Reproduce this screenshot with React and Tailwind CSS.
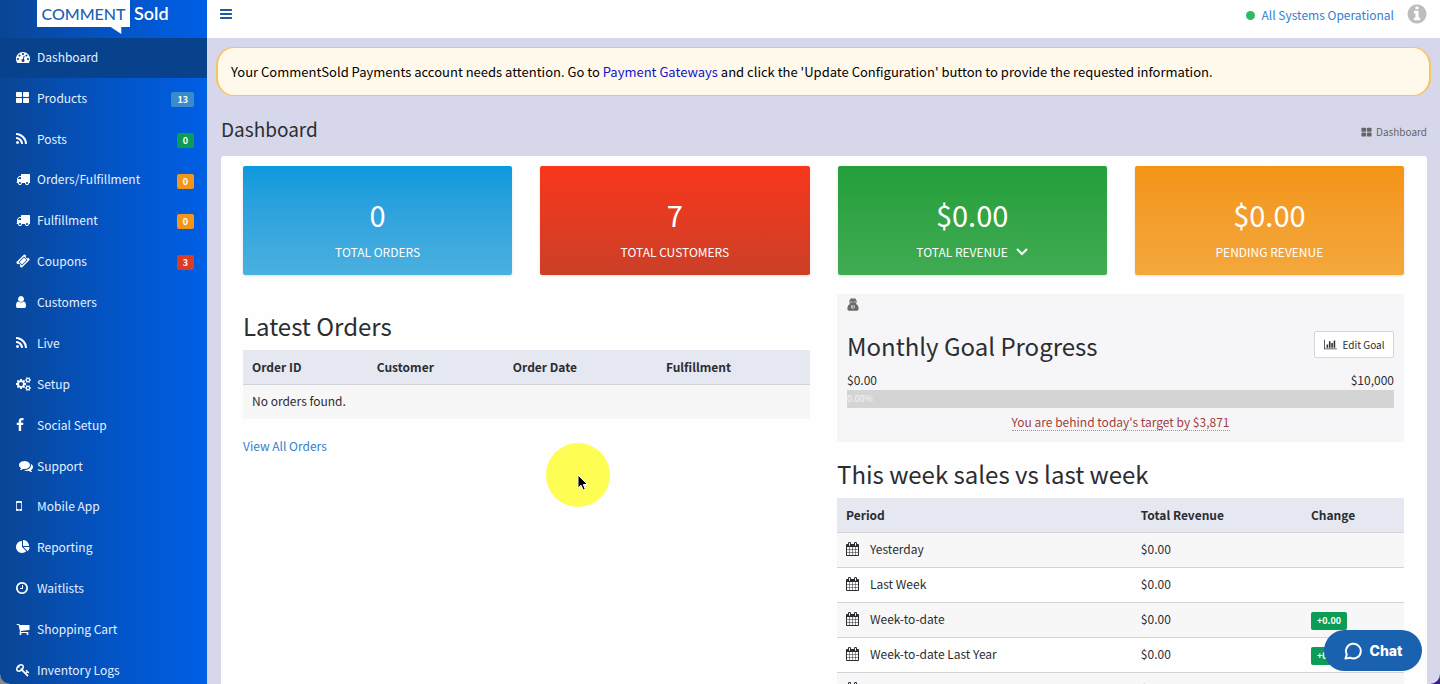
import clsx from 'clsx'

const ICONS = {
  tachometer:
    'M384 1152q0-53-37.5-90.5t-90.5-37.5-90.5 37.5-37.5 90.5 37.5 90.5 90.5 37.5 90.5-37.5 37.5-90.5zm192-448q0-53-37.5-90.5t-90.5-37.5-90.5 37.5-37.5 90.5 37.5 90.5 90.5 37.5 90.5-37.5 37.5-90.5zm428 481l101-382q6-26-7.5-48.5t-38.5-29.5-48 6.5-30 39.5l-101 382q-60 5-107 43.5t-63 98.5q-20 77 20 146t117 89 146-20 89-117q16-60-6-117t-72-91zm660-33q0-53-37.5-90.5t-90.5-37.5-90.5 37.5-37.5 90.5 37.5 90.5 90.5 37.5 90.5-37.5 37.5-90.5zm-640-640q0-53-37.5-90.5t-90.5-37.5-90.5 37.5-37.5 90.5 37.5 90.5 90.5 37.5 90.5-37.5 37.5-90.5zm448 192q0-53-37.5-90.5t-90.5-37.5-90.5 37.5-37.5 90.5 37.5 90.5 90.5 37.5 90.5-37.5 37.5-90.5zm320 448q0 261-141 483-19 29-54 29h-1402q-35 0-54-29-141-221-141-483 0-182 71-348t191-286 286-191 348-71 348 71 286 191 191 286 71 348z',
  grid: 'M832 1024v384q0 52-38 90t-90 38h-512q-52 0-90-38t-38-90v-384q0-52 38-90t90-38h512q52 0 90 38t38 90zm0-768v384q0 52-38 90t-90 38h-512q-52 0-90-38t-38-90v-384q0-52 38-90t90-38h512q52 0 90 38t38 90zm896 768v384q0 52-38 90t-90 38h-512q-52 0-90-38t-38-90v-384q0-52 38-90t90-38h512q52 0 90 38t38 90zm0-768v384q0 52-38 90t-90 38h-512q-52 0-90-38t-38-90v-384q0-52 38-90t90-38h512q52 0 90 38t38 90z',
  rss: 'M576 1344q0 80-56 136t-136 56-136-56-56-136 56-136 136-56 136 56 56 136zm512 123q2 28-17 48-18 21-47 21h-135q-25 0-43-16.5t-20-41.5q-22-229-184.5-391.5t-391.5-184.5q-25-2-41.5-20t-16.5-43v-135q0-29 21-47 17-17 43-17h5q160 13 306 80.5t259 181.5q114 113 181.5 259t80.5 306zm512 2q2 27-18 47-18 20-46 20h-143q-26 0-44.5-17.5t-19.5-42.5q-12-215-101-408.5t-231.5-336-336-231.5-408.5-102q-25-1-42.5-19.5t-17.5-43.5v-143q0-28 20-46 18-18 44-18h3q262 13 501.5 120t425.5 294q187 186 294 425.5t120 501.5z',
  truck:
    'M640 1408q0-52-38-90t-90-38-90 38-38 90 38 90 90 38 90-38 38-90zm-384-512h384v-256h-158q-13 0-22 9l-195 195q-9 9-9 22v30zm1280 512q0-52-38-90t-90-38-90 38-38 90 38 90 90 38 90-38 38-90zm256-1088v1024q0 15-4 26.5t-13.5 18.5-16.5 11.5-23.5 6-22.5 2-25.5 0-22.5-.5q0 106-75 181t-181 75-181-75-75-181h-384q0 106-75 181t-181 75-181-75-75-181h-64q-3 0-22.5.5t-25.5 0-22.5-2-23.5-6-16.5-11.5-13.5-18.5-4-26.5q0-26 19-45t45-19v-320q0-8-.5-35t0-38 2.5-34.5 6.5-37 14-30.5 22.500-30l198-198q19-19 50.5-32t58.5-13h160v-192q0-26 19-45t45-19h1024q26 0 45 19t19 45z',
  ticket:
    'M1024 452l316 316-572 572-316-316zm-211 979l618-618q19-19 19-45t-19-45l-362-362q-18-18-45-18t-45 18l-618 618q-19 19-19 45t19 45l362 362q18 18 45 18t45-18zm889-637l-907 908q-37 37-90.5 37t-90.5-37l-126-126q56-56 56-136t-56-136-136-56-136 56l-125-126q-37-37-37-90.5t37-90.5l907-906q37-37 90.5-37t90.5 37l125 125q-56 56-56 136t56 136 136 56 136-56l126 125q37 37 37 90.5t-37 90.5z',
  user: 'M1536 1399q0 109-62.5 187t-150.5 78h-854q-88 0-150.5-78t-62.5-187q0-85 8.5-160.5t31.5-152 58.5-131 94-89 134.5-34.5q131 128 313 128t313-128q76 0 134.5 34.5t94 89 58.5 131 31.5 152 8.5 160.5zm-256-887q0 159-112.5 271.5t-271.5 112.5-271.5-112.5-112.5-271.5 112.5-271.5 271.5-112.5 271.5 112.5 112.5 271.5z',
  cogs: 'M896 896q0-106-75-181t-181-75-181 75-75 181 75 181 181 75 181-75 75-181zm768 512q0-52-38-90t-90-38-90 38-38 90q0 53 37.5 90.5t90.5 37.5 90.5-37.5 37.5-90.5zm0-1024q0-52-38-90t-90-38-90 38-38 90q0 53 37.5 90.5t90.5 37.5 90.5-37.5 37.5-90.5zm-384 421v185q0 10-7 19.5t-16 10.5l-155 24q-11 35-32 76 34 48 90 115 7 11 7 20 0 12-7 19-23 30-82.5 89.5t-78.5 59.5q-11 0-21-7l-115-90q-37 19-77 31-11 108-23 155-7 24-30 24h-186q-11 0-20-7.5t-10-17.5l-23-153q-34-10-75-31l-118 89q-7 7-20 7-11 0-21-8-144-133-144-160 0-9 7-19 10-14 41-53t47-61q-23-44-35-82l-152-24q-10-1-17-9.5t-7-19.5v-185q0-10 7-19.5t16-10.5l155-24q11-35 32-76-34-48-90-115-7-11-7-20 0-12 7-20 22-30 82-89t79-59q11 0 21 7l115 90q34-18 77-32 11-108 23-154 7-24 30-24h186q11 0 20 7.5t10 17.5l23 153q34 10 75 31l118-89q8-7 20-7 11 0 21 8 144 133 144 160 0 8-7 19-12 16-42 54t-45 60q23 48 34 82l152 23q10 2 17 10.5t7 19.5zm640 533v140q0 16-149 31-12 27-30 52 51 113 51 138 0 4-4 7-122 71-124 71-8 0-46-47t-52-68q-20 2-30 2t-30-2q-14 21-52 68t-46 47q-2 0-124-71-4-3-4-7 0-25 51-138-18-25-30-52-149-15-149-31v-140q0-16 149-31 13-29 30-52-51-113-51-138 0-4 4-7 4-2 35-20t59-34 30-16q8 0 46 46.5t52 67.5q20-2 30-2t30 2q51-71 92-112l6-2q4 0 124 70 4 3 4 7 0 25-51 138 17 23 30 52 149 15 149 31zm0-1024v140q0 16-149 31-12 27-30 52 51 113 51 138 0 4-4 7-122 71-124 71-8 0-46-47t-52-68q-20 2-30 2t-30-2q-14 21-52 68t-46 47q-2 0-124-71-4-3-4-7 0-25 51-138-18-25-30-52-149-15-149-31v-140q0-16 149-31 13-29 30-52-51-113-51-138 0-4 4-7 4-2 35-20t59-34 30-16q8 0 46 46.5t52 67.5q20-2 30-2t30 2q51-71 92-112l6-2q4 0 124 70 4 3 4 7 0 25-51 138 17 23 30 52 149 15 149 31z',
  facebook:
    'M1343 12v264h-157q-86 0-116 36t-30 108v189h293l-39 296h-254v759h-306v-759h-255v-296h255v-218q0-186 104-288.5t277-102.5q147 0 228 12z',
  comments:
    'M1408 768q0 139-94 257t-256.5 186.5-353.5 68.5q-86 0-176-16-124 88-278 128-36 9-86 16h-3q-11 0-20.5-8t-11.5-21q-1-3-1-6.5t.5-6.5 2-6l2.5-5 3.5-5.5 4-5 4.5-5 4-4.5q5-6 23-25t26-29.5 22.5-29 25-38.5 20.5-44q-124-72-195-177t-71-224q0-139 94-257t256.5-186.5 353.5-68.5 353.5 68.5 256.5 186.5 94 257zm384 256q0 120-71 224.5t-195 176.5q10 24 20.5 44t25 38.5 22.5 29 26 29.5 23 25q1 1 4 4.5t4.5 5 4 5 3.5 5.5l2.5 5 2 6 .5 6.5-1 6.5q-3 14-13 22t-22 7q-50-7-86-16-154-40-278-128-90 16-176 16-271 0-472-132 58 4 88 4 161 0 309-45t264-129q125-92 192-212t67-254q0-77-23-152 129 71 204 178t75 230z',
  mobile:
    'M976 1408q0-33-23.5-56.5t-56.5-23.5-56.5 23.5-23.5 56.5 23.5 56.5 56.5 23.5 56.5-23.5 23.5-56.5zm208-160v-704q0-13-9.5-22.5t-22.5-9.5h-512q-13 0-22.5 9.5t-9.5 22.5v704q0 13 9.5 22.5t22.5 9.5h512q13 0 22.5-9.5t9.5-22.5zm-192-848q0-16-16-16h-160q-16 0-16 16t16 16h160q16 0 16-16zm288-16v1024q0 52-38 90t-90 38h-512q-52 0-90-38t-38-90v-1024q0-52 38-90t90-38h512q52 0 90 38t38 90z',
  pie: 'M768 890l546 546q-106 108-247.5 168t-298.5 60q-209 0-385.5-103t-279.5-279.5-103-385.5 103-385.5 279.5-279.5 385.5-103v762zm187 6h773q0 157-60 298.5t-168 247.5zm709-128h-768v-768q209 0 385.5 103t279.5 279.5 103 385.5z',
  clock:
    'M1024 544v448q0 14-9 23t-23 9h-320q-14 0-23-9t-9-23v-64q0-14 9-23t23-9h224v-352q0-14 9-23t23-9h64q14 0 23 9t9 23zm416 352q0-148-73-273t-198-198-273-73-273 73-198 198-73 273 73 273 198 198 273 73 273-73 198-198 73-273zm224 0q0 209-103 385.5t-279.5 279.5-385.5 103-385.5-103-279.5-279.5-103-385.5 103-385.5 279.5-279.5 385.5-103 385.5 103 279.5 279.5 103 385.5z',
  cart: 'M704 1536q0 52-38 90t-90 38-90-38-38-90 38-90 90-38 90 38 38 90zm896 0q0 52-38 90t-90 38-90-38-38-90 38-90 90-38 90 38 38 90zm128-1088v512q0 24-16.5 42.5t-40.5 21.5l-1044 122q13 60 13 70 0 16-24 64h920q26 0 45 19t19 45-19 45-45 19h-1024q-26 0-45-19t-19-45q0-11 8-31.5t16-36 21.5-40 15.5-29.5l-177-823h-204q-26 0-45-19t-19-45 19-45 45-19h256q16 0 28.5 6.5t19.5 15.5 13 24.5 8 26 5.5 29.5 4.5 26h1201q26 0 45 19t19 45z',
  key: 'M832 512q0-80-56-136t-136-56-136 56-56 136q0 42 19 83-41-19-83-19-80 0-136 56t-56 136 56 136 136 56 136-56 56-136q0-42-19-83 41 19 83 19 80 0 136-56t56-136zm851 704q0 17-49 66t-66 49q-9 0-28.5-16t-36.5-33-38.5-40-24.5-26l-96 96 220 220q28 28 28 68 0 42-39 81t-81 39q-40 0-68-28l-671-671q-176 131-365 131-163 0-265.5-102.5t-102.5-265.5q0-160 95-313t248-248 313-95q163 0 265.5 102.5t102.5 265.5q0 189-131 365l355 355 96-96q-3-3-26-24.5t-40-38.5-33-36.5-16-28.5q0-17 49-66t66-49q13 0 23 10 6 6 46 44.5t82 79.5 86.5 86 73 78 28.5 41z',
  bars: 'M1664 1344v128q0 26-19 45t-45 19h-1408q-26 0-45-19t-19-45v-128q0-26 19-45t45-19h1408q26 0 45 19t19 45zm0-512v128q0 26-19 45t-45 19h-1408q-26 0-45-19t-19-45v-128q0-26 19-45t45-19h1408q26 0 45 19t19 45zm0-512v128q0 26-19 45t-45 19h-1408q-26 0-45-19t-19-45v-128q0-26 19-45t45-19h1408q26 0 45 19t19 45z',
  info: 'M1152 1376v-160q0-14-9-23t-23-9h-96v-512q0-14-9-23t-23-9h-320q-14 0-23 9t-9 23v160q0 14 9 23t23 9h96v320h-96q-14 0-23 9t-9 23v160q0 14 9 23t23 9h448q14 0 23-9t9-23zm-128-896v-160q0-14-9-23t-23-9h-192q-14 0-23 9t-9 23v160q0 14 9 23t23 9h192q14 0 23-9t9-23zm640 416q0 209-103 385.5t-279.5 279.5-385.5 103-385.5-103-279.5-279.5-103-385.5 103-385.5 279.5-279.5 385.5-103 385.5 103 279.5 279.5 103 385.5z',
  barChart:
    'M640 896v512h-256v-512h256zm384-512v1024h-256v-1024h256zm1024 1152v128h-2048v-1536h128v1408h1920zm-640-896v768h-256v-768h256zm384-384v1152h-256v-1152h256z',
  calendar:
    'M192 1664h288v-288h-288v288zm352 0h320v-288h-320v288zm-352-352h288v-320h-288v320zm352 0h320v-320h-320v320zm-352-384h288v-288h-288v288zm736 736h320v-288h-320v288zm-384-736h320v-288h-320v288zm768 736h288v-288h-288v288zm-384-352h320v-320h-320v320zm-352-864v-288q0-13-9.5-22.5t-22.5-9.5h-64q-13 0-22.5 9.5t-9.5 22.5v288q0 13 9.5 22.5t22.5 9.5h64q13 0 22.5-9.5t9.5-22.5zm736 864h288v-320h-288v320zm-384-384h320v-288h-320v288zm384 0h288v-288h-288v288zm32-480v-288q0-13-9.5-22.5t-22.5-9.5h-64q-13 0-22.5 9.5t-9.5 22.5v288q0 13 9.5 22.5t22.5 9.5h64q13 0 22.5-9.5t9.5-22.5zm384-64v1280q0 52-38 90t-90 38h-1408q-52 0-90-38t-38-90v-1280q0-52 38-90t90-38h128v-96q0-66 47-113t113-47h64q66 0 113 47t47 113v96h384v-96q0-66 47-113t113-47h64q66 0 113 47t47 113v96h128q52 0 90 38t38 90z',
}

// x is the left bearing of the glyph, so icons line up on their left edge
function Icon({ name, x = 0, w = 1792, className = 'w-3.5 h-3.5' }) {
  return (
    <svg viewBox={`${x} 0 ${w} 1792`} fill="currentColor" className={clsx('shrink-0', className)} aria-hidden="true">
      <path d={ICONS[name]} />
    </svg>
  )
}

const NAV = [
  { label: 'Dashboard', icon: 'tachometer', active: true, short: true },
  { label: 'Products', icon: 'grid', x: 64, badge: '13', color: 'bg-[#3a8bc9]' },
  { label: 'Posts', icon: 'rss', x: 192, badge: '0', color: 'bg-[#0b9c55]' },
  { label: 'Orders/Fulfillment', icon: 'truck', badge: '0', color: 'bg-[#f39519]', short: true },
  { label: 'Fulfillment', icon: 'truck', badge: '0', color: 'bg-[#f39519]' },
  { label: 'Coupons', icon: 'ticket', badge: '3', color: 'bg-[#d93d28]' },
  { label: 'Customers', icon: 'user', x: 256 },
  { label: 'Live', icon: 'rss', x: 192 },
  { label: 'Setup', icon: 'cogs', w: 1920, iconClass: 'w-[15px] h-3.5' },
  { label: 'Social Setup', icon: 'facebook', x: 384 },
  { label: 'Support', icon: 'comments', x: -384, w: 2176, iconClass: 'w-[17px] h-3.5' },
  { label: 'Mobile App', icon: 'mobile', x: 512, short: true },
  { label: 'Reporting', icon: 'pie' },
  { label: 'Waitlists', icon: 'clock', x: 128 },
  { label: 'Shopping Cart', icon: 'cart' },
  { label: 'Inventory Logs', icon: 'key' },
]

const TILES = [
  { value: '0', label: 'TOTAL ORDERS', color: 'from-[#0a99dd] to-[#4ab0df]' },
  { value: '7', label: 'TOTAL CUSTOMERS', color: 'from-[#f9361b] to-[#cb3f27]' },
  { value: '$0.00', label: 'TOTAL REVENUE', color: 'from-[#239f3a] to-[#40ab53]', menu: true },
  { value: '$0.00', label: 'PENDING REVENUE', color: 'from-[#f39415] to-[#f3a83c]' },
]

const PERIODS = [
  { label: 'Yesterday', revenue: '$0.00' },
  { label: 'Last Week', revenue: '$0.00' },
  { label: 'Week-to-date', revenue: '$0.00', change: '+0.00' },
  { label: 'Week-to-date Last Year', revenue: '$0.00', change: '+0.00' },
  { label: 'This Month', revenue: '$0.00' },
]

function Logo() {
  return (
    <a href="#home" className="flex h-[38px] items-start pl-[37px] text-base leading-[27px] font-['Lato',sans-serif] text-white">
      <span className="relative h-[27px] w-[93px] bg-white text-center font-medium text-[#2160b0]">
        COMMENT
        <svg viewBox="0 0 12 8" className="absolute right-2 top-full h-[7px] w-3" fill="#fff" aria-hidden="true">
          <path d="M0 0h12v8z" />
        </svg>
      </span>
      <span className="pl-1 text-[18px] font-semibold">Sold</span>
    </a>
  )
}

function Sidebar() {
  return (
    <aside className="w-[207px] shrink-0 bg-linear-to-r from-[#0a4595] via-[#0353c3] to-[#005fe6]">
      <Logo />
      <nav>
        <ul>
          {NAV.map((item) => (
            <li key={item.label}>
              <a
                href="#nav"
                className={clsx(
                  'flex items-center pl-4 pr-[13px] pb-[2px] text-[#e4f1ff]',
                  item.short ? 'h-10' : 'h-[41px]',
                  item.active && 'bg-[#09428c]'
                )}
              >
                <span className="w-[21px] shrink-0 text-white">
                  <Icon name={item.icon} x={item.x} w={item.w} className={item.iconClass} />
                </span>
                <span className="flex-1">{item.label}</span>
                {item.badge ? (
                  <span className={clsx('mt-1 rounded-xs px-[6px] text-[9px] leading-[15px] font-bold text-white', item.color)}>
                    {item.badge}
                  </span>
                ) : null}
              </a>
            </li>
          ))}
        </ul>
      </nav>
    </aside>
  )
}

function StatTile({ value, label, color, menu }) {
  return (
    <div className={clsx('flex h-[109px] flex-col items-center rounded-xs bg-linear-to-b pt-7 text-white shadow-sm', color)}>
      <div className="text-[29px] leading-[41px]">{value}</div>
      {menu ? (
        <button type="button" className="flex items-center gap-2 text-xs leading-[34px]">
          {label}
          <svg viewBox="0 0 12 8" className="h-2 w-3" fill="none" stroke="currentColor" strokeWidth="2" aria-hidden="true">
            <path d="M1 1l5 5 5-5" />
          </svg>
        </button>
      ) : (
        <div className="text-xs leading-[34px]">{label}</div>
      )}
    </div>
  )
}

function LatestOrders() {
  return (
    <section className="pt-[14px]">
      <h2 className="text-2xl leading-[36px]">Latest Orders</h2>
      <table className="mt-[6px] w-full table-fixed text-left">
        <thead>
          <tr className="h-[34px] bg-[#e6e8f1]">
            <th className="w-[22%] px-[9px]">Order ID</th>
            <th className="w-[24%] px-[9px]">Customer</th>
            <th className="w-[27%] px-[9px]">Order Date</th>
            <th className="px-[9px]">Fulfillment</th>
          </tr>
        </thead>
        <tbody>
          <tr className="h-[35px] border-t border-[#d2d4d9] bg-[#f7f7f8]">
            <td colSpan={4} className="px-[9px] pb-[2px]">
              No orders found.
            </td>
          </tr>
        </tbody>
      </table>
      <a href="#orders" className="mt-[17px] inline-block text-[#3480cc]">
        View All Orders
      </a>
    </section>
  )
}

function MonthlyGoal() {
  return (
    <section className="h-[148px] bg-[#f6f6f8] px-[10px] pt-1">
      <svg viewBox="0 0 12 13" className="h-[13px] w-3" aria-hidden="true">
        <path fill="#6a6a6a" d="M3.4.8 4.6.2 6 .7 7.4.2l1.2.6.4 1.7h1v1H9.2c.4 1 .3 1.700-.2 2.600C10.700 7 11.600 8.600 11.600 10.600c0 1.500-.6 2.200-1.800 2.200H2.200C1 12.800.4 12.100.4 10.600c0-2 .9-3.600 2.600-4.500-.5-.9-.6-1.600-.2-2.600H2v-1h1z" />
        <path stroke="#f6f6f8" strokeWidth=".7" fill="none" d="M3.200 4h2.300M6.500 4h2.300M4.500 7.200v3M5.900 7.200v4M7.300 7.200v3" />
      </svg>
      <div className="mt-[15px] flex items-center justify-between">
        <h2 className="text-2xl leading-[40px]">Monthly Goal Progress</h2>
        <button
          type="button"
          className="mb-[3px] flex h-[27px] w-20 items-center justify-center gap-[6px] rounded-xs border border-[#d4d5dd] bg-white text-[10px]"
        >
          <Icon name="barChart" w={2048} className="h-[11px] w-[13px]" />
          Edit Goal
        </button>
      </div>
      <div className="mt-[5px] flex justify-between pb-px leading-[18px]">
        <span>$0.00</span>
        <span>$10,000</span>
      </div>
      <div className="h-[18px] bg-[#d4d4d5] text-[9px] leading-[18px] text-[#f4f4f4]">0.00%</div>
      <div className="pt-1 text-center">
        <span className="inline-block border-b border-dotted border-[#999] leading-[17px] text-[#a23f3b]">
          You are behind today's target by $3,871
        </span>
      </div>
    </section>
  )
}

function WeekSales() {
  return (
    <section className="pt-[14px]">
      <h2 className="text-2xl leading-[36px]">This week sales vs last week</h2>
      <table className="mt-[6px] w-full table-fixed text-left">
        <thead>
          <tr className="h-[34px] bg-[#e6e8f1]">
            <th className="w-[52%] px-[9px]">Period</th>
            <th className="w-[30%] px-[9px]">Total Revenue</th>
            <th className="px-[9px]">Change</th>
          </tr>
        </thead>
        <tbody>
          {PERIODS.map((row) => (
            <tr key={row.label} className="h-[35px] border-t border-[#d2d4d9] odd:bg-[#f7f7f8]">
              <td className="px-[9px] pb-[2px]">
                <span className="flex items-center gap-[10px]">
                  <Icon name="calendar" x={64} />
                  {row.label}
                </span>
              </td>
              <td className="px-[9px] pb-[2px]">{row.revenue}</td>
              <td className="px-[9px]">
                {row.change ? (
                  <span className="inline-block rounded-xs bg-[#0b9c55] px-[6px] align-middle text-[9px] leading-[18px] font-bold text-white">
                    {row.change}
                  </span>
                ) : null}
              </td>
            </tr>
          ))}
        </tbody>
      </table>
    </section>
  )
}

export default function App() {
  return (
    <div className="h-screen bg-linear-to-r from-[#8d8a86] to-[#3a1a9c]">
      <div className="flex h-full overflow-hidden rounded-b-[10px] bg-[#d6d7ea] font-['Noto_Sans_CJK_SC','Open_Sans',sans-serif] text-xs leading-[20px] text-[#2b2d30]">
        <Sidebar />
        <div className="min-w-0 flex-1">
          <header className="flex h-[38px] items-start justify-between bg-white pl-3 pr-[13px]">
            <button type="button" aria-label="Toggle menu" className="pt-[7px] text-[#1f57a5]">
              <Icon name="bars" />
            </button>
            <div className="flex items-center gap-[13px] pt-[3px]">
              <a href="#status" className="flex items-center gap-[7px] pt-[2px] text-[#3480cc]">
                <span className="h-[9px] w-[9px] rounded-full bg-[#2fbb62]" />
                All Systems Operational
              </a>
              <Icon name="info" x={128} w={1536} className="h-[22px] w-5 text-[#bdbdbd]" />
            </div>
          </header>

          <div className="mx-[9px] mt-[9px] rounded-[18px] border border-x-2 border-[#f6c45c] bg-[#fff9ec] pt-[14px] pb-[13px] pl-[13px] text-[13px] text-black">
            Your CommentSold Payments account needs attention. Go to{' '}
            <a href="#gateways" className="text-[#1111cc]">
              Payment Gateways
            </a>{' '}
            and click the 'Update Configuration' button to provide the requested information.
          </div>

          <main className="pl-[14px] pr-[13px]">
            <div className="flex h-[60px] items-center justify-between pt-[6px]">
              <h1 className="text-[19px]">Dashboard</h1>
              <div className="flex items-center gap-1 pt-[6px] text-[10px] text-[#666]">
                <Icon name="grid" className="h-[11px] w-[11px]" />
                Dashboard
              </div>
            </div>

            <div className="h-screen rounded-t-[3px] bg-[#fefefe] pl-[22px] pr-[23px] pt-[10px]">
              <div className="grid grid-cols-4 gap-7">
                {TILES.map((tile) => (
                  <StatTile key={tile.label} {...tile} />
                ))}
              </div>
              <div className="mt-[19px] grid grid-cols-2 gap-[27px]">
                <LatestOrders />
                <div>
                  <MonthlyGoal />
                  <WeekSales />
                </div>
              </div>
            </div>
          </main>
        </div>
      </div>

      <button
        type="button"
        className="fixed bottom-[13px] right-[18px] flex h-[41px] w-[98px] items-center justify-center gap-2 rounded-full bg-[#1a62b0] font-['Inter',sans-serif] text-sm font-extrabold text-white"
      >
        <svg viewBox="0 0 18 18" className="h-[18px] w-[18px]" fill="none" stroke="currentColor" strokeWidth="2" strokeLinejoin="round" aria-hidden="true">
          <path d="M1.500 16.500l1.300-4A7.400 7.400 0 1 1 6 15.700z" />
        </svg>
        Chat
      </button>

      {/* click highlight and pointer */}
      <div className="pointer-events-none fixed left-[546px] top-[443px] h-16 w-16 rounded-full bg-[#fdfd54]">
        <svg viewBox="0 0 12 18" className="absolute left-[31px] top-[31px] h-[18px] w-3" aria-hidden="true">
          <path d="M1 1v13.200l3.100-2.900 2 4.800 2.200-.9-2-4.700h4.200z" fill="#000" stroke="#fff" />
        </svg>
      </div>
    </div>
  )
}
